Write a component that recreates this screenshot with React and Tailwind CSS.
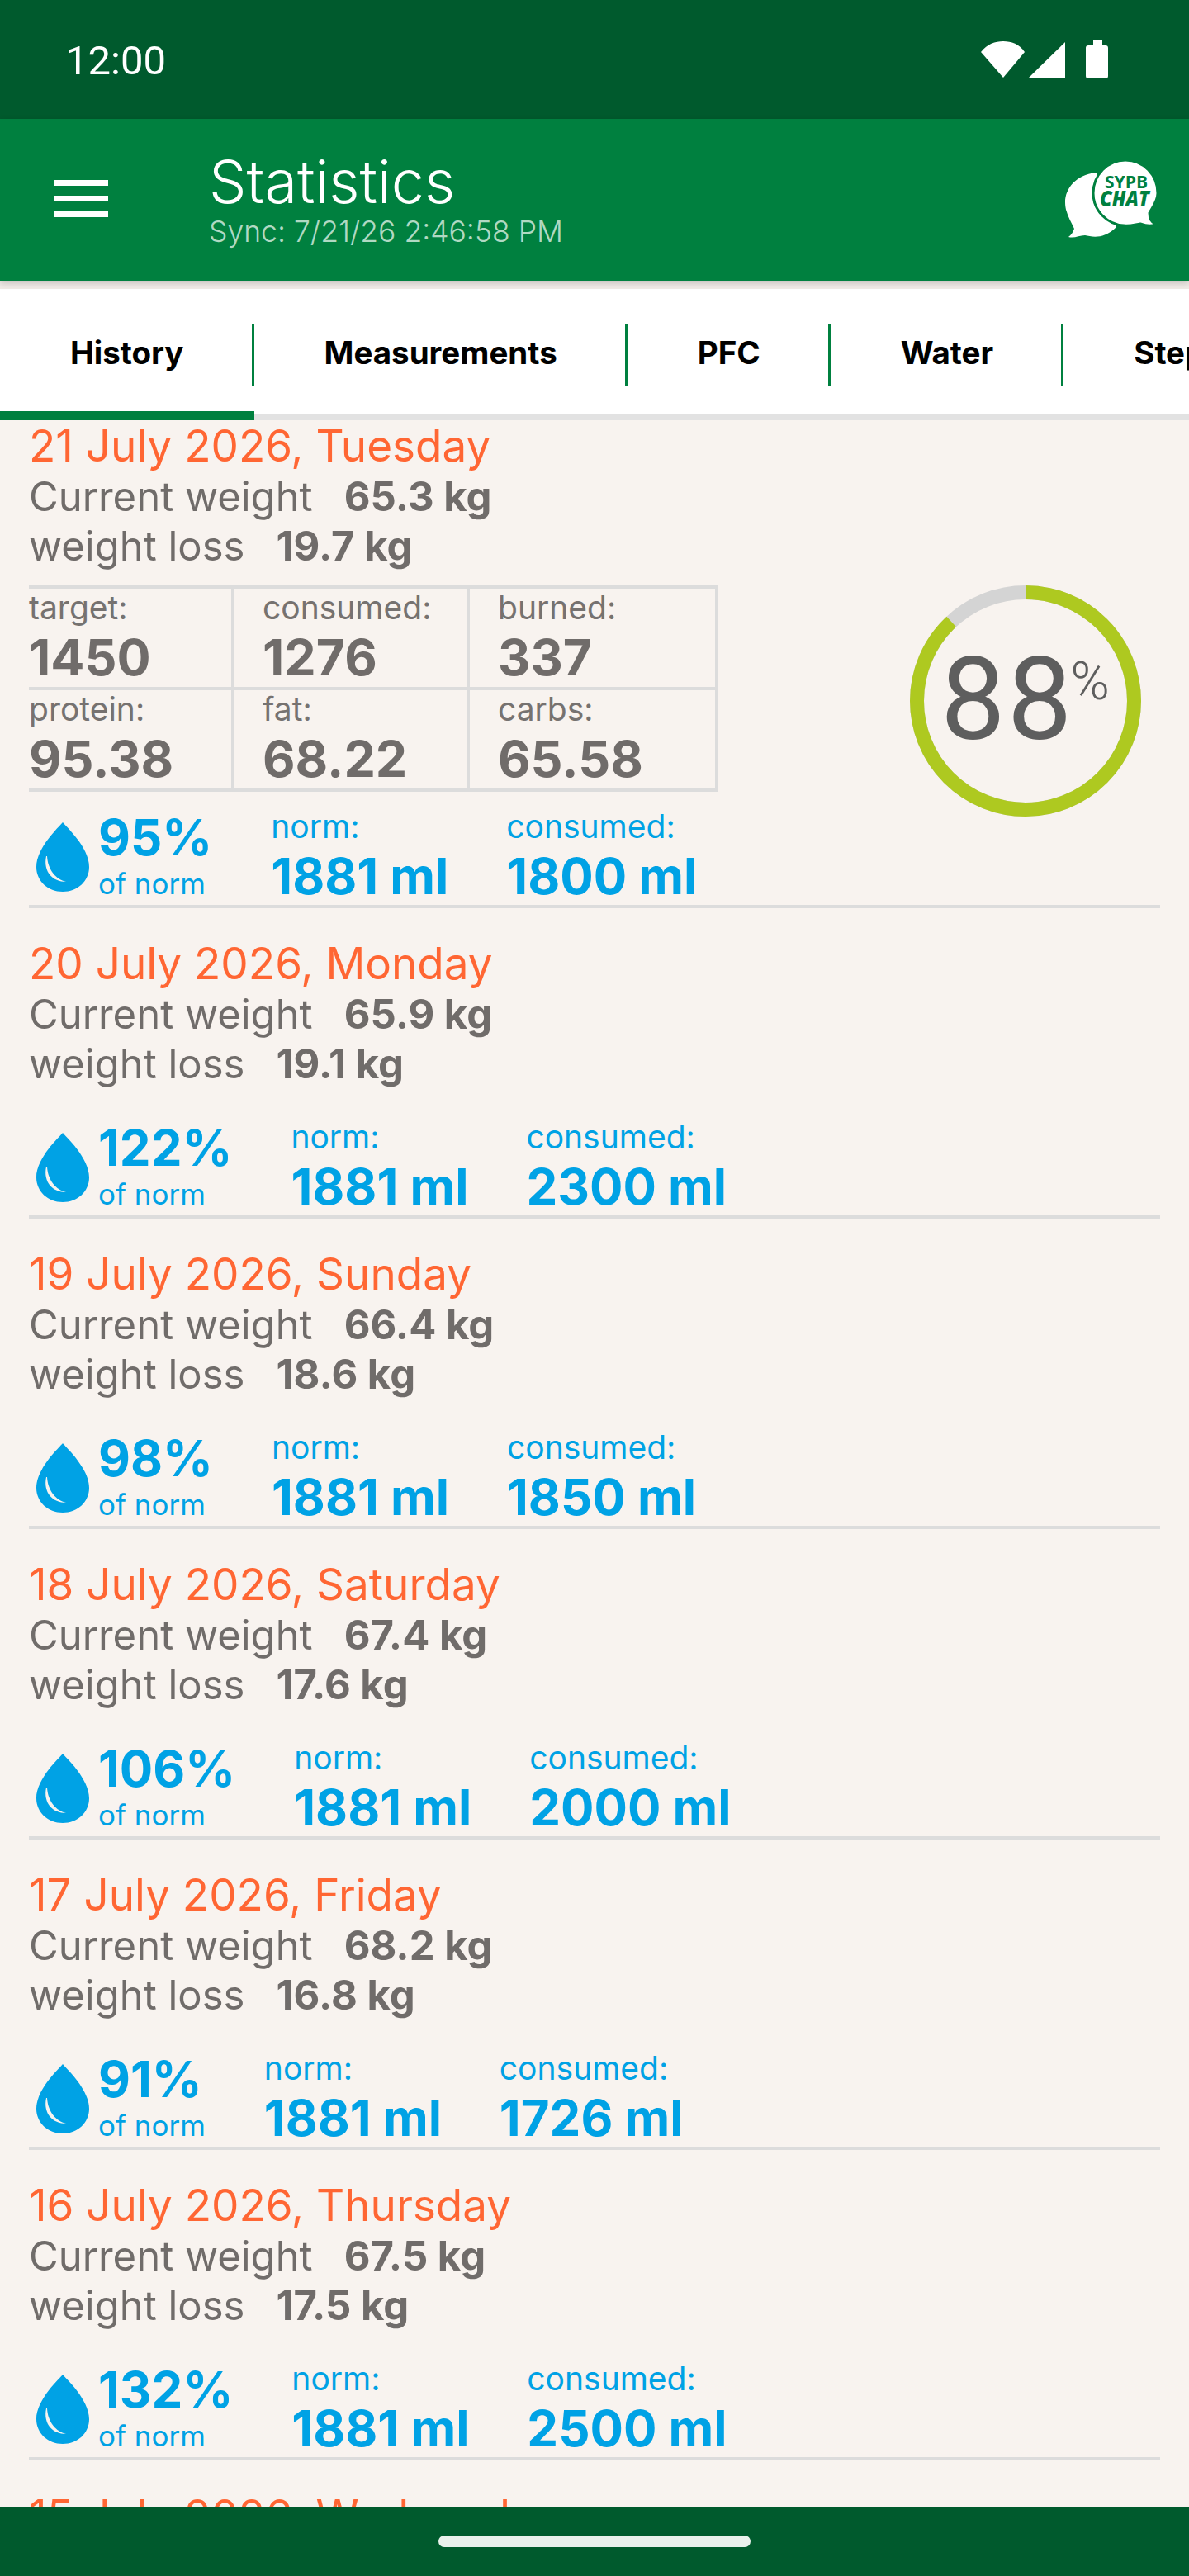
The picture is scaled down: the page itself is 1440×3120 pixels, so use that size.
const days = [
  { date: '21 July 2026, Tuesday', weight: '65.3 kg', loss: '19.7 kg', pct: '95%', consumed: '1800 ml', stats: true },
  { date: '20 July 2026, Monday', weight: '65.9 kg', loss: '19.1 kg', pct: '122%', consumed: '2300 ml' },
  { date: '19 July 2026, Sunday', weight: '66.4 kg', loss: '18.6 kg', pct: '98%', consumed: '1850 ml' },
  { date: '18 July 2026, Saturday', weight: '67.4 kg', loss: '17.6 kg', pct: '106%', consumed: '2000 ml' },
  { date: '17 July 2026, Friday', weight: '68.2 kg', loss: '16.8 kg', pct: '91%', consumed: '1726 ml' },
  { date: '16 July 2026, Thursday', weight: '67.5 kg', loss: '17.5 kg', pct: '132%', consumed: '2500 ml' },
];

const tabs = ['History', 'Measurements', 'PFC', 'Water', 'Steps'];

const nutrition = [
  [['target:', '1450'], ['consumed:', '1276'], ['burned:', '337']],
  [['protein:', '95.38'], ['fat:', '68.22'], ['carbs:', '65.58']],
];

function Drop() {
  return (
    <svg viewBox="0 0 64 84" className="w-[64px] h-[84px] shrink-0">
      <path d="M32 0 C35 4 64 30 64 54 C64 71 50 84 32 84 C14 84 0 71 0 54 C0 30 29 4 32 0 Z" fill="#00a2e5" />
      <path d="M12 41 C8 60 20 72 36 72 C24 69 14 58 13 41 Z" fill="#f8f3ef" />
    </svg>
  );
}

function ChatLogo() {
  return (
    <svg viewBox="0 0 120 100" className="w-[120px] h-[100px] -mt-[4px]">
      <path d="M38 19 C14 22 1 38 1 55 C1 68 8 78 12 87 C10 92 8 95 5 97 C12 99 18 95 25 95 C34 97 48 100 63 85 L60 40 Z" fill="#fff" />
      <path d="M74 4 C96 4 113 22 113 44 C113 54 106 62 103 68 C103 75 105 79 110 81 C106 85 98 83 92 81 C85 82 80 84 72 83 C52 82 35 65 35 44 C35 22 52 4 74 4 Z" fill="#fff" stroke="#00803f" strokeWidth="3" />
      <text x="75" y="38" textAnchor="middle" fontFamily="'Open Sans', sans-serif" fontWeight="700" fontSize="21" fill="#00803f" textLength="52" lengthAdjust="spacingAndGlyphs">SYPB</text>
      <text x="73" y="60" textAnchor="middle" fontFamily="'Open Sans', sans-serif" fontWeight="800" fontStyle="italic" fontSize="26" fill="#00803f" textLength="60" lengthAdjust="spacingAndGlyphs">CHAT</text>
    </svg>
  );
}

function Ring() {
  const r = 131.5;
  const c = 2 * Math.PI * r;
  return (
    <div className="relative w-[280px] h-[280px] shrink-0">
      <svg viewBox="0 0 280 280" className="w-[280px] h-[280px] -rotate-90">
        <circle cx="140" cy="140" r={r} fill="none" stroke="#d4d4d4" strokeWidth="17" />
        <circle cx="140" cy="140" r={r} fill="none" stroke="#aec920" strokeWidth="17" strokeDasharray={`${c * 0.88} ${c}`} />
      </svg>
      <div className="absolute left-[37px] top-[58px] flex items-start text-[#5e5e5e] font-['Roboto',sans-serif]">
        <span className="text-[140px] leading-[160px] font-normal tracking-[2px]">88</span>
        <span className="text-[64px] leading-[60px] font-light mt-[29px] -ml-[4px]">%</span>
      </div>
    </div>
  );
}

function StatsTable() {
  const widths = ['w-[249px]', 'w-[285px]', 'w-[297px]'];
  return (
    <div className="w-[835px] h-[250px] border-y-[4px] border-r-[4px] border-[#dcdcdc] flex flex-col">
      {nutrition.map((row, i) => (
        <div key={i} className={`flex ${i === 0 ? 'border-b-[4px] border-[#dcdcdc] h-[123px]' : 'h-[119px]'}`}>
          {row.map(([label, value], j) => (
            <div key={label} className={`${widths[j]} ${j < 2 ? 'border-r-[4px] border-[#dcdcdc]' : ''} ${j > 0 ? 'pl-[34px]' : ''} flex flex-col`}>
              <span className="text-[39px] leading-[44px] text-[#767270] mt-[1px]">{label}</span>
              <span className="text-[61px] leading-[68px] font-bold text-[#706c6a] mt-[4px]">{value}</span>
            </div>
          ))}
        </div>
      ))}
    </div>
  );
}

function Water({ pct, consumed }) {
  return (
    <div className="flex items-start pl-[9px]">
      <div className="mt-[8px]"><Drop /></div>
      <div className="ml-[11px] w-max flex flex-col -mt-[5px]">
        <span className="text-[60px] leading-[62px] font-bold text-[#00a2e5]">{pct}</span>
        <span className="text-[35px] leading-[40px] text-[#00a2e5] mt-[5px]">of norm</span>
      </div>
      <div className="ml-[71px] flex flex-col w-[285px] -mt-[9px]">
        <span className="text-[39px] leading-[44px] text-[#00a2e5]">norm:</span>
        <span className="text-[60px] leading-[62px] font-bold text-[#00a2e5] mt-[7px]">1881 ml</span>
      </div>
      <div className="flex flex-col -mt-[9px]">
        <span className="text-[39px] leading-[44px] text-[#00a2e5]">consumed:</span>
        <span className="text-[60px] leading-[62px] font-bold text-[#00a2e5] mt-[7px]">{consumed}</span>
      </div>
    </div>
  );
}

function Day({ day }) {
  return (
    <section className={`mx-[35px] border-b-[4px] border-[#dcdcdc] flex flex-col ${day.stats ? 'h-[624px] pt-[32px]' : 'h-[376px] pt-[35px]'}`}>
      <h2 className="text-[53px] leading-[64px] font-normal text-[#ff6633] whitespace-nowrap">{day.date}</h2>
      <p className="text-[49px] leading-[60px] text-[#706c6a] flex gap-[38px]">
        <span>Current weight</span><span className="font-bold">{day.weight}</span>
      </p>
      <p className="text-[49px] leading-[60px] text-[#706c6a] flex gap-[38px]">
        <span>weight loss</span><span className="font-bold">{day.loss}</span>
      </p>
      {day.stats && (
        <div className="mt-[17px] flex justify-between items-start pr-[23px]">
          <StatsTable />
          <Ring />
        </div>
      )}
      <div className={day.stats ? 'mt-[-1px]' : 'mt-[45px]'}>
        <Water pct={day.pct} consumed={day.consumed} />
      </div>
    </section>
  );
}

export default function App() {
  return (
    <div className="w-[1440px] h-[3120px] flex flex-col overflow-hidden bg-[#f8f3ef] font-['Inter',sans-serif]">
      <div className="h-[144px] shrink-0 bg-[#005a2d] flex items-center justify-between pl-[79px] pr-[98px]">
        <span className="text-[49px] leading-none text-white font-['Roboto',sans-serif] mt-[3px]">12:00</span>
        <svg viewBox="0 0 154 46" className="w-[154px] h-[46px]" fill="#fff">
          <path d="M0 14 C8 4 17 1 27 1 C37 1 46 4 53 14 L27 45 Z" />
          <path d="M58 45 L102 2 V45 Z" />
          <path d="M136 6 V0 H147 V6 H151 Q154 6 154 9 V43 Q154 46 151 46 H130 Q127 46 127 43 V9 Q127 6 130 6 Z" />
        </svg>
      </div>

      <header className="h-[196px] shrink-0 bg-[#00803f] flex items-center justify-between pl-[65px] pr-[31px] relative z-10 shadow-[0_3px_8px_rgba(0,0,0,0.18)]">
        <div className="flex items-center">
          <svg viewBox="0 0 66 45" className="w-[66px] h-[45px] mr-[122px] -mt-[3px]" fill="#fff">
            <rect y="0" width="66" height="7" />
            <rect y="19" width="66" height="7" />
            <rect y="38" width="66" height="7" />
          </svg>
          <div className="flex flex-col">
            <span className="text-[72px] leading-[76px] text-white font-light -mt-[2px]">Statistics</span>
            <span className="text-[35.5px] leading-[40px] text-[#b0d9c3] font-light mt-[3px]">Sync: 7/21/26 2:46:58 PM</span>
          </div>
        </div>
        <ChatLogo />
      </header>

      <div className="h-[10px] shrink-0 bg-[#f0ebe7]" />

      <nav className="h-[159px] shrink-0 bg-white border-b-[7px] border-[#e2e2e2] flex items-stretch">
        {tabs.map((tab, i) => (
          <div key={tab} className="relative shrink-0 px-[85px] h-full flex items-center">
            <span className="text-[38.5px] font-bold text-black mt-[4px]">{tab}</span>
            {i < tabs.length - 1 && <span className="absolute right-0 top-[43px] h-[74px] w-[3px] bg-[#00803f]" />}
            {i === 0 && <span className="absolute left-0 right-0 -bottom-[7px] h-[11px] bg-[#00803f]" />}
          </div>
        ))}
      </nav>

      <main className="flex-1 min-h-0 overflow-hidden">
        <div className="-mt-[33px]">
          {days.map((d) => <Day key={d.date} day={d} />)}
          <h2 className="mx-[35px] mt-[35px] text-[53px] leading-[64px] font-normal text-[#ff6633]">15 July 2026, Wednesday</h2>
        </div>
      </main>

      <div className="h-[84px] shrink-0 bg-[#005a2d] flex justify-center pt-[35px] relative z-10">
        <span className="w-[378px] h-[14px] rounded-full bg-[#e9f1ec]" />
      </div>
    </div>
  );
}
